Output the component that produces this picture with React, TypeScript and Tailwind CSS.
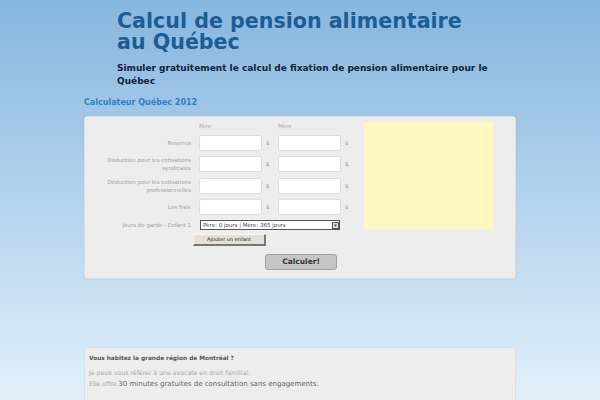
import React from "react";

const font = { fontFamily: '"DejaVu Sans", Verdana, sans-serif' };

function Row({ label, top }: { label: React.ReactNode; top: number }) {
  return (
    <div className="flex items-center h-[16px]" style={{ marginTop: top }}>
      <div className="w-[106px] text-right text-[5.5px] leading-[8px] text-[#a3a3a3]">{label}</div>
      <div className="w-[8px]" />
      <div className="w-[63px] h-[16px] bg-white rounded-[2px] border border-[#dedede]" />
      <div className="w-[16px] text-[5.5px] text-[#999] pl-[4px]">$</div>
      <div className="w-[63px] h-[16px] bg-white rounded-[2px] border border-[#dedede]" />
      <div className="w-[16px] text-[5.5px] text-[#999] pl-[4px]">$</div>
    </div>
  );
}

export default function App() {
  return (
    <div
      className="w-[600px] h-[400px] overflow-hidden bg-gradient-to-b from-[#86b6df] to-[#e2f0fb]"
      style={font}
    >
      <div className="w-[432px] mx-auto">
        <div className="pl-[33px] pt-[11px]">
          <h1 className="text-[20.6px] leading-[21px] font-bold text-[#1b5d94]">
            Calcul de pension alimentaire
            <br />
            au Québec
          </h1>
          <p className="mt-[9px] text-[9px] leading-[13px] font-bold text-[#0f2238] w-[380px]">
            Simuler gratuitement le calcul de fixation de pension alimentaire pour le Québec
          </p>
        </div>
        <div className="mt-[10px] text-[8px] leading-[10px] font-bold text-[#2a82c6]">Calculateur Québec 2012</div>
        <div className="mt-[8px] h-[163px] bg-[#ededed] border border-[#d9dfe5] rounded-[3px] shadow-[0_0_2px_rgba(0,0,0,0.1)] flex">
          <div className="w-[278px]">
            <div className="flex mt-[5px] h-[9px] items-center text-[5.5px] text-[#a8a8a8]">
              <div className="w-[114px]" />
              <div className="w-[79px]">Père</div>
              <div>Mère</div>
            </div>
            <Row label="Revenus" top={4} />
            <Row label={<>Déduction pour les cotisations<br />syndicales</>} top={5} />
            <Row label={<>Déduction pour les cotisations<br />professionnelles</>} top={6} />
            <Row label="Les frais" top={5} />
            <div className="flex items-center h-[10px] mt-[5px]">
              <div className="w-[106px] text-right text-[5.5px] text-[#a3a3a3]">Jours de garde - Enfant 1</div>
              <div className="w-[9px]" />
              <div className="w-[140px] h-[10px] bg-white border border-[#555] flex items-center justify-between text-[5.5px] text-[#444] pl-[2px]">
                <span>Père: 0 jours | Mère: 365 jours</span>
                <span className="w-[7px] h-[7px] border border-[#555] bg-[#ddd] flex items-center justify-center text-[5px] leading-none">▾</span>
              </div>
            </div>
            <div className="flex mt-[4px]">
              <div className="w-[108px]" />
              <div className="w-[73px] h-[12px] bg-[#e4e0d9] border-t border-l border-[#f6f6f6] border-r-2 border-b-2 border-r-[#777] border-b-[#777] text-[5px] text-[#222] flex items-center justify-center">
                Ajouter un enfant
              </div>
            </div>
            <div className="flex mt-[8px]">
              <div className="w-[180px]" />
              <div className="w-[72px] h-[16px] bg-[#c5c5c5] border border-[#a0a0a0] rounded-[3px] text-[7.5px] font-bold text-[#333] flex items-center justify-center">
                Calculer!
              </div>
            </div>
          </div>
          <div className="ml-[1px] mt-[5px] w-[129px] h-[107px] bg-[#fff7bf]" />
        </div>
        <div className="mt-[68px] h-[80px] bg-[#ededed] border border-[#d9dfe5] rounded-[3px] px-[4px] pt-[6px]">
          <div className="text-[5.8px] font-bold text-[#555] leading-[8px]">Vous habitez la grande région de Montréal ?</div>
          <div className="mt-[5px] text-[6.2px] text-[#aaa] leading-[11px]">Je peux vous référer à une avocate en droit familial.</div>
          <div className="text-[6.2px] text-[#aaa] leading-[11px]">
            Elle offre <span className="text-[7px] text-[#666]">30 minutes gratuites de consultation sans engagements.</span>
          </div>
        </div>
      </div>
    </div>
  );
}
